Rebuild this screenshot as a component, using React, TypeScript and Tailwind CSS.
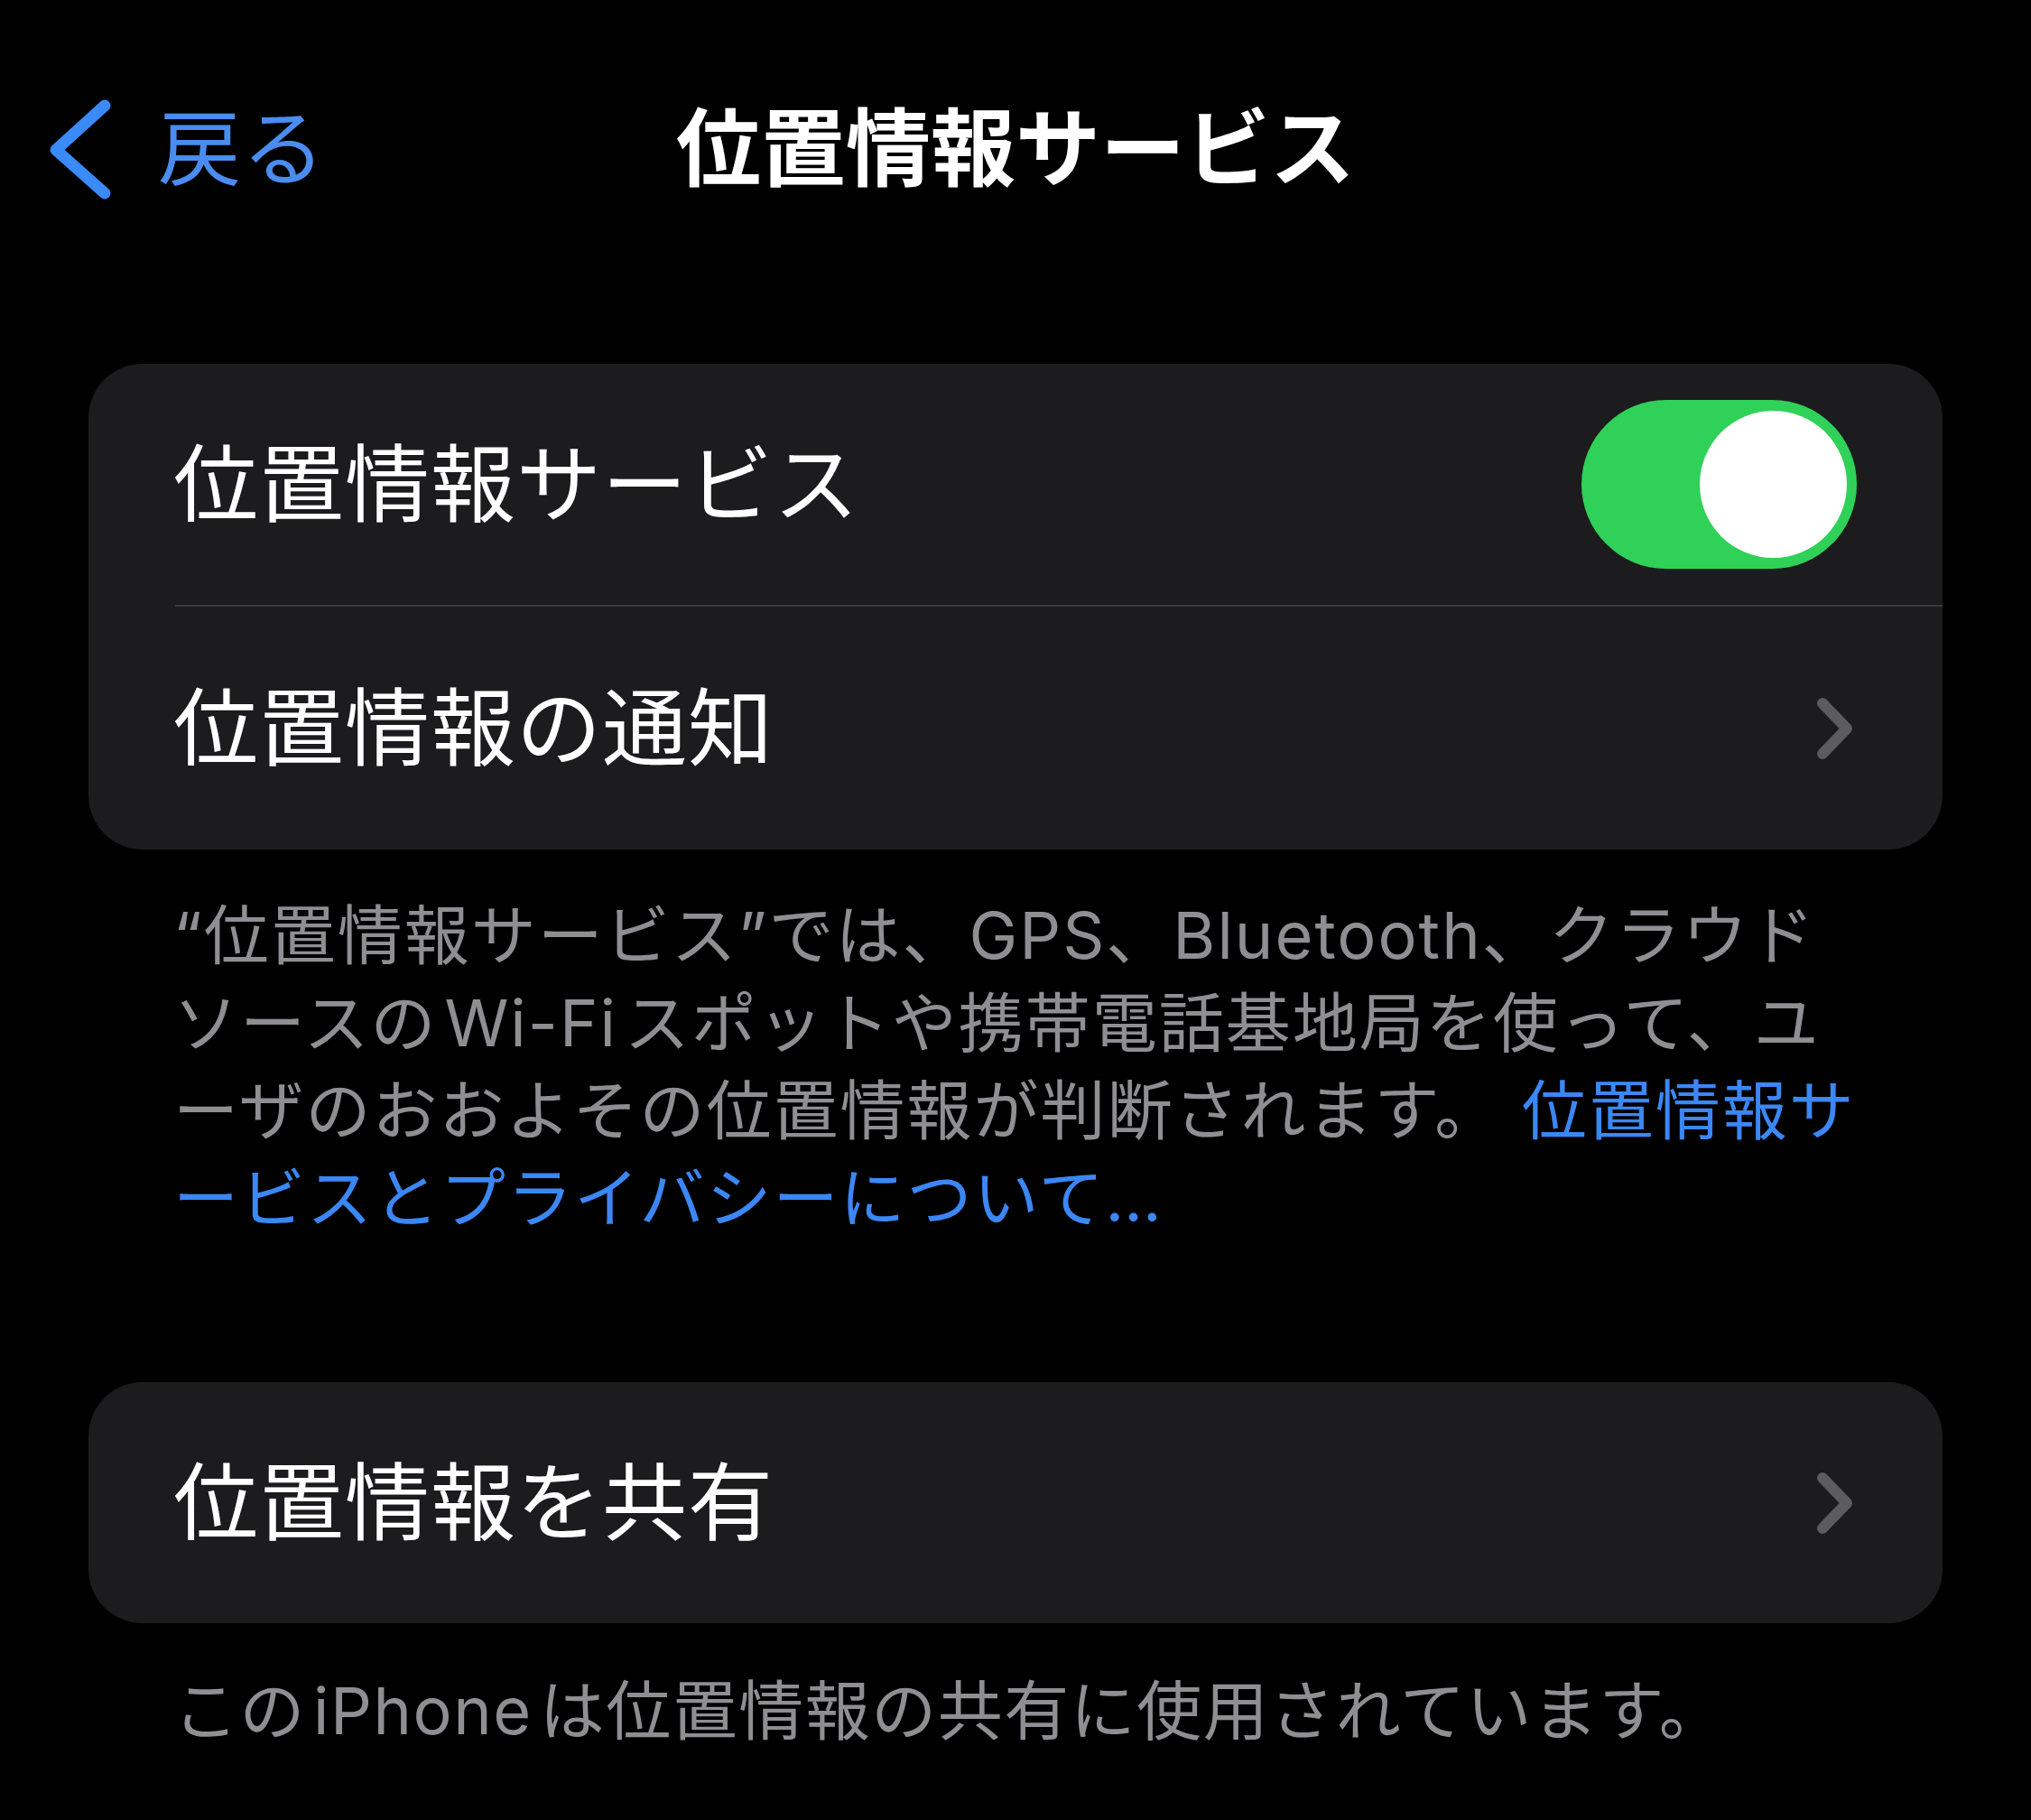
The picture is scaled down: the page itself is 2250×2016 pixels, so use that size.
const jp = { fontFamily: 'Inter, "Noto Sans CJK JP", sans-serif' };

function Chevron() {
  return (
    <svg width="41" height="70" viewBox="0 0 41 70" className="shrink-0">
      <path d="M7 7 L34 35 L7 63" fill="none" stroke="#5b5b60" strokeWidth="12" strokeLinecap="round" strokeLinejoin="round" />
    </svg>
  );
}

function Toggle() {
  return (
    <div className="flex h-[187px] w-[305px] shrink-0 items-center justify-end rounded-full bg-[#30d158] pr-[11px]">
      <div className="h-[163px] w-[163px] rounded-full bg-white" />
    </div>
  );
}

export default function App() {
  return (
    <div className="flex h-[2016px] w-[2250px] flex-col bg-black" style={jp}>
      {/* nav bar */}
      <div className="mt-[100px] grid h-[130px] grid-cols-[1fr_auto_1fr] items-center">
        <div className="flex items-center pl-[50px]">
          <svg width="75" height="115" viewBox="0 0 75 115" className="shrink-0">
            <path d="M66 9 L12 58 L66 106" fill="none" stroke="#3a8af7" strokeWidth="13" strokeLinecap="round" strokeLinejoin="round" />
          </svg>
          <span className="ml-[50px] text-[92px] leading-none tracking-[1px] text-[#4a8cf0]">戻る</span>
        </div>
        <div className="text-[94px] font-bold leading-none text-white">位置情報サービス</div>
        <div />
      </div>

      {/* location services card */}
      <div className="mx-[98px] mt-[173px] overflow-hidden rounded-[60px] bg-[#1c1c1e]">
        <div className="flex h-[267px] items-center justify-between pl-[94px] pr-[95px]">
          <span className="text-[94px] leading-none tracking-[1px] text-white">位置情報サービス</span>
          <Toggle />
        </div>
        <div className="ml-[96px] h-[2px] bg-[#3a3a3c]" />
        <div className="flex h-[269px] items-center justify-between pl-[94px] pr-[99px]">
          <span className="text-[94px] leading-none tracking-[1px] text-white">位置情報の通知</span>
          <Chevron />
        </div>
      </div>

      <p className="mt-[46px] whitespace-nowrap pl-[192px] text-[72px] leading-[97px] tracking-[2px] text-[#8e8e93]">
        “位置情報サービス”では、GPS、Bluetooth、クラウド
        <br />
        ソースの<span className="mx-[8px]">Wi-Fi</span>スポットや携帯電話基地局を使って、ユ
        <br />
        ーザのおおよその位置情報が判断されます。 <span className="text-[#3b87f5]">位置情報サ</span>
        <br />
        <span className="text-[#3b87f5]">ービスとプライバシーについて…</span>
      </p>

      {/* share card */}
      <div className="mx-[98px] mt-[156px] rounded-[60px] bg-[#1c1c1e]">
        <div className="flex h-[267px] items-center justify-between pl-[94px] pr-[99px]">
          <span className="text-[94px] leading-none tracking-[1px] text-white">位置情報を共有</span>
          <Chevron />
        </div>
      </div>

      <p className="mt-[48px] whitespace-nowrap pl-[192px] text-[72px] leading-[97px] tracking-[1.5px] text-[#8e8e93]">
        この<span className="mx-[8px]">iPhone</span>は位置情報の共有に使用されています。
      </p>
    </div>
  );
}
